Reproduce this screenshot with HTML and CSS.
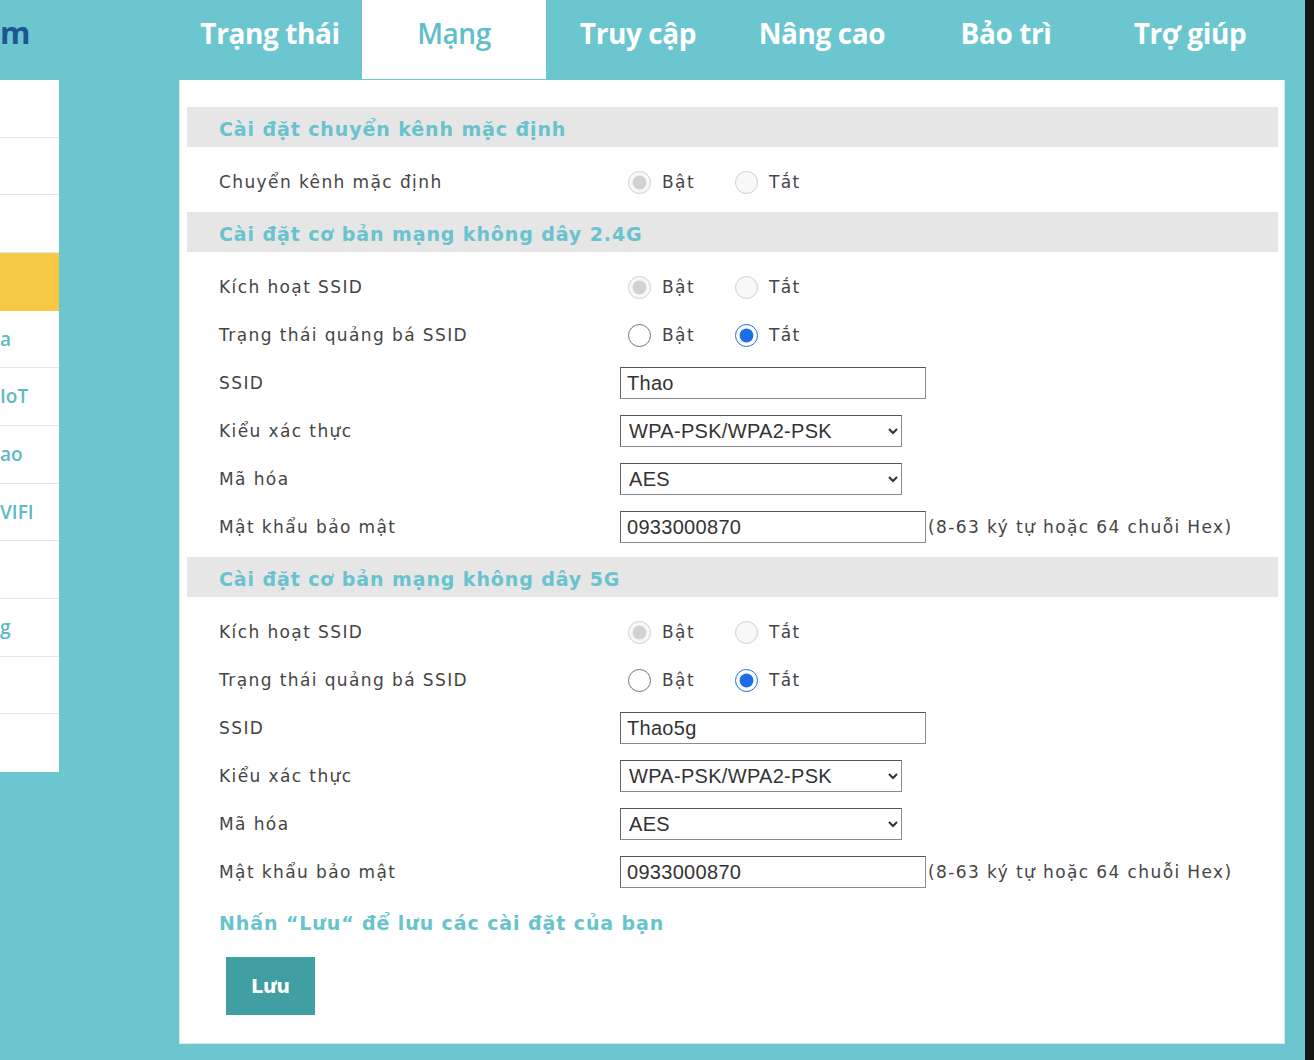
FILE: index.html
```html
<!DOCTYPE html>
<html lang="vi">
<head>
  <meta charset="UTF-8">
  <meta name="viewport" content="width=device-width, initial-scale=1.0">
  <title>Mạng - Cài đặt cơ bản</title>
  <link rel="stylesheet" href="styles.css">
</head>
<body>
  <div class="screen">
    <div class="app">
      <header class="topbar">
        <div class="brand">m</div>
        <nav class="tabs">
          <a class="tab" href="#">Trạng thái</a>
          <a class="tab active" href="#">Mạng</a>
          <a class="tab" href="#">Truy cập</a>
          <a class="tab" href="#">Nâng cao</a>
          <a class="tab" href="#">Bảo trì</a>
          <a class="tab" href="#">Trợ giúp</a>
        </nav>
      </header>

      <div class="body">
        <aside class="sidebar">
          <ul class="menu">
            <li></li>
            <li></li>
            <li></li>
            <li class="current"></li>
            <li>a</li>
            <li>IoT</li>
            <li>ao</li>
            <li>VIFI</li>
            <li></li>
            <li>g</li>
            <li></li>
            <li></li>
          </ul>
        </aside>

        <main class="panel">
          <section class="section">
            <h2 class="section-title">Cài đặt chuyển kênh mặc định</h2>
            <div class="section-body">
              <div class="row">
                <label class="row-label">Chuyển kênh mặc định</label>
                <div class="radios">
                  <label class="radio-opt"><input type="radio" name="band" checked disabled> Bật</label>
                  <label class="radio-opt"><input type="radio" name="band" disabled> Tắt</label>
                </div>
              </div>
            </div>
          </section>

          <section class="section">
            <h2 class="section-title">Cài đặt cơ bản mạng không dây 2.4G</h2>
            <div class="section-body">
              <div class="row">
                <label class="row-label">Kích hoạt SSID</label>
                <div class="radios">
                  <label class="radio-opt"><input type="radio" name="en24" checked disabled> Bật</label>
                  <label class="radio-opt"><input type="radio" name="en24" disabled> Tắt</label>
                </div>
              </div>
              <div class="row">
                <label class="row-label">Trạng thái quảng bá SSID</label>
                <div class="radios">
                  <label class="radio-opt"><input type="radio" name="bc24"> Bật</label>
                  <label class="radio-opt"><input type="radio" name="bc24" checked> Tắt</label>
                </div>
              </div>
              <div class="row">
                <label class="row-label">SSID</label>
                <input class="field" type="text" value="Thao">
              </div>
              <div class="row">
                <label class="row-label">Kiểu xác thực</label>
                <select class="field select">
                  <option>WPA-PSK/WPA2-PSK</option>
                </select>
              </div>
              <div class="row">
                <label class="row-label">Mã hóa</label>
                <select class="field select">
                  <option>AES</option>
                </select>
              </div>
              <div class="row">
                <label class="row-label">Mật khẩu bảo mật</label>
                <input class="field" type="text" value="0933000870">
                <span class="hint">(8-63 ký tự hoặc 64 chuỗi Hex)</span>
              </div>
            </div>
          </section>

          <section class="section">
            <h2 class="section-title">Cài đặt cơ bản mạng không dây 5G</h2>
            <div class="section-body">
              <div class="row">
                <label class="row-label">Kích hoạt SSID</label>
                <div class="radios">
                  <label class="radio-opt"><input type="radio" name="en5" checked disabled> Bật</label>
                  <label class="radio-opt"><input type="radio" name="en5" disabled> Tắt</label>
                </div>
              </div>
              <div class="row">
                <label class="row-label">Trạng thái quảng bá SSID</label>
                <div class="radios">
                  <label class="radio-opt"><input type="radio" name="bc5"> Bật</label>
                  <label class="radio-opt"><input type="radio" name="bc5" checked> Tắt</label>
                </div>
              </div>
              <div class="row">
                <label class="row-label">SSID</label>
                <input class="field" type="text" value="Thao5g">
              </div>
              <div class="row">
                <label class="row-label">Kiểu xác thực</label>
                <select class="field select">
                  <option>WPA-PSK/WPA2-PSK</option>
                </select>
              </div>
              <div class="row">
                <label class="row-label">Mã hóa</label>
                <select class="field select">
                  <option>AES</option>
                </select>
              </div>
              <div class="row">
                <label class="row-label">Mật khẩu bảo mật</label>
                <input class="field" type="text" value="0933000870">
                <span class="hint">(8-63 ký tự hoặc 64 chuỗi Hex)</span>
              </div>
            </div>
          </section>

          <p class="save-note">Nhấn “Lưu“ để lưu các cài đặt của bạn</p>
          <button class="save-btn" type="button">Lưu</button>
        </main>
      </div>
    </div>
    <div class="edge"></div>
  </div>
</body>
</html>
```

FILE: styles.css
```css
/* General styles */
* {
  margin: 0;
  padding: 0;
  box-sizing: border-box;
}

body {
  background-color: #6cc6d0;
  font-family: "DejaVu Sans", "Open Sans", sans-serif;
  color: #444;
  overflow: hidden;
}

.screen {
  display: flex;
  height: 1060px;
}

.app {
  width: 1305px;
}

.edge {
  flex: 1;
  background-color: #161616;
}

/* Top bar with tabs */
.topbar {
  display: flex;
  height: 80px;
}

.brand {
  width: 178px;
  overflow: hidden;
  padding-top: 12px;
  font-family: "Open Sans", sans-serif;
  font-size: 31px;
  font-weight: 700;
  color: #1d5690;
  line-height: 40px;
}

.tabs {
  display: flex;
}

.tab {
  width: 184px;
  height: 79px;
  padding-top: 13px;
  text-align: center;
  font-family: "Open Sans", sans-serif;
  font-size: 28px;
  font-weight: 700;
  line-height: 40px;
  letter-spacing: -0.4px;
  color: #fff;
  text-decoration: none;
}

.tab.active {
  background-color: #fff;
  color: #5fbec9;
  font-weight: 600;
}

/* Body layout */
.body {
  display: flex;
}

.sidebar {
  width: 179px;
}

.menu {
  width: 59px;
  background-color: #fff;
  list-style: none;
  overflow: hidden;
}

.menu li {
  height: 57.67px;
  border-bottom: 1px solid #d9ebee;
  font-family: "Open Sans", sans-serif;
  font-size: 19px;
  font-weight: 600;
  color: #5cb9c5;
  line-height: 57px;
  white-space: nowrap;
}

.menu li:last-child {
  border-bottom: none;
}

.menu li.current {
  background-color: #f6c843;
  border-bottom-color: #f6c843;
}

/* Content panel */
.panel {
  width: 1106px;
  background-color: #fff;
  border: 1px solid #d8eef1;
  border-top: none;
  padding: 27px 6px 28px 7px;
}

.section-title {
  height: 40px;
  background-color: #e6e6e6;
  padding-top: 2px;
  padding-left: 32px;
  font-size: 19px;
  font-weight: 700;
  letter-spacing: 0.9px;
  color: #69c3cd;
  line-height: 40px;
}

.section-body {
  padding: 11px 0 6px;
}

.row {
  display: flex;
  align-items: center;
  height: 48px;
  padding-left: 32px;
}

.row-label {
  flex: 0 0 401px;
  font-size: 17px;
  letter-spacing: 1.4px;
  color: #454545;
}

.radios {
  display: flex;
  padding-left: 8px;
}

.radio-opt {
  display: inline-flex;
  align-items: center;
  gap: 11px;
  width: 107px;
  font-size: 17px;
  letter-spacing: 1.4px;
  color: #454545;
}

.radio-opt input {
  width: 23px;
  height: 23px;
  margin: 0;
  accent-color: #1b6ee6;
}

.field {
  width: 306px;
  height: 32px;
  padding: 0 6px;
  font-family: "Liberation Sans", Arial, sans-serif;
  font-size: 20px;
  letter-spacing: 0.3px;
  color: #333;
  background-color: #fff;
  border: 1px solid #8c8c8c;
  border-top-color: #555;
  border-left-color: #666;
  border-radius: 0;
}

.select {
  width: 282px;
  padding: 0 4px;
}

.hint {
  margin-left: 2px;
  font-size: 17px;
  letter-spacing: 1.4px;
  color: #454545;
}

/* Save area */
.save-note {
  margin-top: 6px;
  padding-left: 32px;
  font-size: 19px;
  font-weight: 700;
  letter-spacing: 0.9px;
  color: #69c3cd;
  line-height: 30px;
}

.save-btn {
  display: block;
  margin: 19px 0 0 39px;
  width: 89px;
  height: 58px;
  background-color: #3f9fa2;
  border: none;
  font-family: inherit;
  font-size: 19px;
  font-weight: 700;
  color: #fff;
  cursor: pointer;
}
```
